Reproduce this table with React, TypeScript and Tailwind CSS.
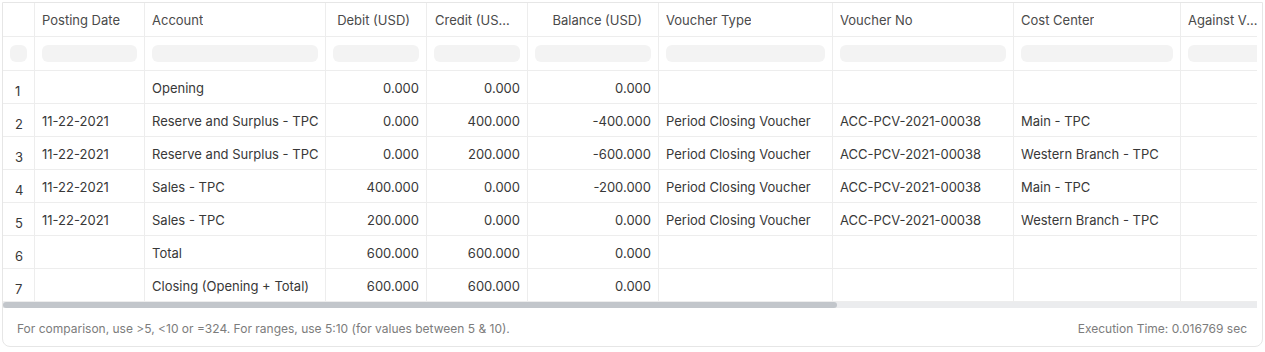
import React from 'react';

type Col = { label: string; width: string; num?: boolean };

const columns: Col[] = [
    { label: 'Posting Date', width: 'w-[110px]' },
    { label: 'Account', width: 'w-[181px]' },
    { label: 'Debit (USD)', width: 'w-[101px]', num: true },
    { label: 'Credit (USD)', width: 'w-[101px]', num: true },
    { label: 'Balance (USD)', width: 'w-[131px]', num: true },
    { label: 'Voucher Type', width: 'w-[174px]' },
    { label: 'Voucher No', width: 'w-[181px]' },
    { label: 'Cost Center', width: 'w-[167px]' },
    { label: 'Against Voucher', width: 'w-[92px]' },
];

const rows: string[][] = [
    ['', 'Opening', '0.000', '0.000', '0.000', '', '', '', ''],
    ['11-22-2021', 'Reserve and Surplus - TPC', '0.000', '400.000', '-400.000', 'Period Closing Voucher', 'ACC-PCV-2021-00038', 'Main - TPC', ''],
    ['11-22-2021', 'Reserve and Surplus - TPC', '0.000', '200.000', '-600.000', 'Period Closing Voucher', 'ACC-PCV-2021-00038', 'Western Branch - TPC', ''],
    ['11-22-2021', 'Sales - TPC', '400.000', '0.000', '-200.000', 'Period Closing Voucher', 'ACC-PCV-2021-00038', 'Main - TPC', ''],
    ['11-22-2021', 'Sales - TPC', '200.000', '0.000', '0.000', 'Period Closing Voucher', 'ACC-PCV-2021-00038', 'Western Branch - TPC', ''],
    ['', 'Total', '600.000', '600.000', '0.000', '', '', '', ''],
    ['', 'Closing (Opening + Total)', '600.000', '600.000', '0.000', '', '', '', ''],
];

export default function App() {
    return (
        <div className="bg-white w-[1265px] h-[352px] pt-[2px] pl-[2px] font-['Inter',sans-serif]">
            <div className="w-[1261px] border border-[#e6e6e6] rounded-b-lg bg-white">
                {/* Table */}
                <div className="w-[1254px] overflow-hidden">
                    <div className="w-max">
                        {/* Header */}
                        <div className="flex h-[34px] border-b border-[#ededed] text-[13px] text-[#4a4a4a]">
                            <div className="w-[32px] shrink-0 border-r border-[#ededed]"></div>
                            {columns.map((c) => (
                                <div
                                    key={c.label}
                                    className={`${c.width} shrink-0 border-r border-[#ededed] flex items-center min-w-0 pt-[2px] ${c.num ? 'justify-end pl-2 pr-[16px]' : 'pl-[7px] pr-[9px]'}`}
                                >
                                    <span className="truncate">{c.label}</span>
                                </div>
                            ))}
                        </div>
                        {/* Filter row */}
                        <div className="flex h-[34px] border-b border-[#ededed]">
                            <div className="w-[32px] shrink-0 border-r border-[#ededed] px-[7px] pt-[8px]">
                                <div className="h-[17px] rounded-md bg-[#f3f3f3]"></div>
                            </div>
                            {columns.map((c) => (
                                <div key={c.label} className={`${c.width} shrink-0 border-r border-[#ededed] px-[7px] pt-[8px]`}>
                                    <div className="h-[17px] rounded-md bg-[#f3f3f3]"></div>
                                </div>
                            ))}
                        </div>
                        {/* Data rows */}
                        {rows.map((r, i) => (
                            <div key={i} className="flex h-[33px] border-b border-[#ededed] text-[13px] text-[#383838]">
                                <div className="w-[32px] shrink-0 border-r border-[#ededed] flex items-center pl-[12px] pt-[9px]">{i + 1}</div>
                                {columns.map((c, j) => (
                                    <div
                                        key={c.label}
                                        className={`${c.width} shrink-0 border-r border-[#ededed] flex items-center whitespace-nowrap overflow-hidden pt-[4px] ${c.num ? 'justify-end pl-[7px] pr-[7px]' : 'pl-[7px] pr-[2px]'}`}
                                    >
                                        {r[j]}
                                    </div>
                                ))}
                            </div>
                        ))}
                    </div>
                    {/* Horizontal scrollbar */}
                    <div className="h-[6px] bg-[#ebecee]">
                        <div className="h-[6px] w-[834px] rounded-full bg-[#c2c6cb]"></div>
                    </div>
                </div>
                {/* Footer */}
                <div className="flex items-center justify-between h-[38px] pt-[4px] pl-[14px] pr-[15px] text-[12px] text-[#7c7c7c]">
                    <span>For comparison, use &gt;5, &lt;10 or =324. For ranges, use 5:10 (for values between 5 &amp; 10).</span>
                    <span>Execution Time: 0.016769 sec</span>
                </div>
            </div>
        </div>
    );
}
